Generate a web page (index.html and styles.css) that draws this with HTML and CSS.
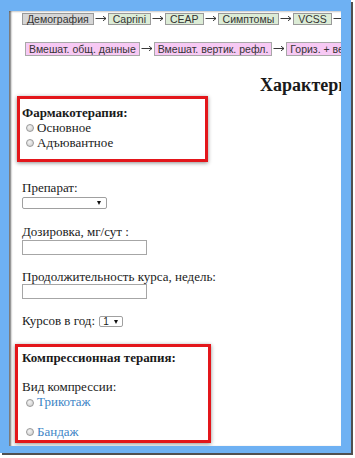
FILE: index.html
```html
<!DOCTYPE html>
<html lang="ru">
<head>
<meta charset="utf-8">
<title>Характеристика лечения</title>
<link rel="stylesheet" href="styles.css">
</head>
<body>
<div class="viewport">
<div class="page">
  <nav class="steps steps-main">
    <span class="step step-current">Демография</span><span class="arrow"><svg viewBox="0 0 12 7" width="12" height="7"><path d="M0.5 3.5H11M8 1.2L11 3.5L8 5.8" fill="none" stroke="#222" stroke-width="0.9"/></svg></span>
    <span class="step">Caprini</span><span class="arrow"><svg viewBox="0 0 12 7" width="12" height="7"><path d="M0.5 3.5H11M8 1.2L11 3.5L8 5.8" fill="none" stroke="#222" stroke-width="0.9"/></svg></span>
    <span class="step">CEAP</span><span class="arrow"><svg viewBox="0 0 12 7" width="12" height="7"><path d="M0.5 3.5H11M8 1.2L11 3.5L8 5.8" fill="none" stroke="#222" stroke-width="0.9"/></svg></span>
    <span class="step">Симптомы</span><span class="arrow"><svg viewBox="0 0 12 7" width="12" height="7"><path d="M0.5 3.5H11M8 1.2L11 3.5L8 5.8" fill="none" stroke="#222" stroke-width="0.9"/></svg></span>
    <span class="step">VCSS</span><span class="arrow"><svg viewBox="0 0 12 7" width="12" height="7"><path d="M0.5 3.5H11M8 1.2L11 3.5L8 5.8" fill="none" stroke="#222" stroke-width="0.9"/></svg></span>
    <span class="step">SF-36</span>
  </nav>
  <nav class="steps steps-interv">
    <span class="step step-pink">Вмешат. общ. данные</span><span class="arrow"><svg viewBox="0 0 12 7" width="12" height="7"><path d="M0.5 3.5H11M8 1.2L11 3.5L8 5.8" fill="none" stroke="#222" stroke-width="0.9"/></svg></span>
    <span class="step step-pink">Вмешат. вертик. рефл.</span><span class="arrow"><svg viewBox="0 0 12 7" width="12" height="7"><path d="M0.5 3.5H11M8 1.2L11 3.5L8 5.8" fill="none" stroke="#222" stroke-width="0.9"/></svg></span>
    <span class="step step-pink">Гориз. + вертик. рефл.</span>
  </nav>

  <h2 class="title">Характеристика лечения</h2>

  <div class="callout callout-pharma">
    <div class="line"><b>Фармакотерапия:</b></div>
    <label class="line radio-line"><span class="radio"></span>Основное</label>
    <label class="line radio-line"><span class="radio"></span>Адъювантное</label>
  </div>

  <div class="field field-first">
    <div class="line">Препарат:</div>
    <span class="select select-drug"><span class="caret"></span></span>
  </div>
  <div class="field">
    <div class="line">Дозировка, мг/сут :</div>
    <input class="text-input" type="text">
  </div>
  <div class="field">
    <div class="line">Продолжительность курса, недель:</div>
    <input class="text-input" type="text">
  </div>
  <div class="field">
    <div class="line">Курсов в год: <span class="select select-small"><span class="select-value">1</span><span class="caret"></span></span></div>
  </div>

  <div class="callout callout-compress">
    <div class="line"><b>Компрессионная терапия:</b></div>
    <div class="line blank"></div>
    <div class="line">Вид компрессии:</div>
    <label class="line radio-line link"><span class="radio"></span>Трикотаж</label>
    <div class="line blank"></div>
    <label class="line radio-line link"><span class="radio"></span>Бандаж</label>
  </div>
</div>
</div>
<div class="frame"></div>
</body>
</html>
```
FILE: styles.css
```css
html, body {
  margin: 0;
  padding: 0;
  overflow: hidden;
  background: #ffffff;
}
body {
  width: 355px;
  height: 458px;
  font-family: "Liberation Serif", "Times New Roman", serif;
  font-size: 13px;
  color: #1a1a1a;
}
.viewport {
  width: 343px;
  height: 458px;
  overflow: hidden;
}
.page {
  padding: 13px 0 0 22px;
  width: 700px;
}
.steps {
  display: flex;
  white-space: nowrap;
  font-family: "Liberation Sans", Arial, sans-serif;
  font-size: 10.5px;
  color: #333;
}
.step {
  display: block;
  box-sizing: border-box;
  padding: 0 4px;
  border: 1px solid #9a9a9a;
  background: #dcecd6;
}
.steps-main .step {
  height: 12px;
  line-height: 10px;
}
.step-current {
  background: #d6d6d6;
}
.steps-interv {
  margin-top: 17px;
  margin-left: 3px;
}
.steps-interv .step {
  height: 14px;
  line-height: 12px;
  padding: 0 3px;
}
.step-pink {
  background: #f7c9f4;
  border-color: #a8a8a8;
}
.arrow {
  display: flex;
  align-items: center;
  justify-content: center;
  width: 14px;
}
.arrow svg {
  display: block;
  margin-top: -1px;
}
.title {
  margin: 19px 0 0 238px;
  font-size: 18px;
  line-height: 21px;
  font-weight: bold;
  white-space: nowrap;
}
.line {
  display: block;
  height: 14.8px;
  line-height: 14.8px;
  white-space: nowrap;
}
.callout {
  box-sizing: border-box;
  border: 3px solid #e3161b;
  box-shadow: 0 1px 4px rgba(0, 0, 0, 0.45);
}
.callout-pharma {
  margin-left: -5px;
  width: 191px;
  padding: 7px 0 8.6px 2px;
}
.callout-compress {
  margin-top: 7px;
  margin-left: -7px;
  width: 196px;
  padding: 3.6px 0 0 4px;
}
.radio-line {
  display: flex;
  align-items: center;
}
.radio {
  display: inline-block;
  box-sizing: border-box;
  width: 8px;
  height: 8px;
  margin: 0 3px 0 4px;
  border: 1px solid #9a9a9a;
  border-radius: 50%;
  background: radial-gradient(circle at 40% 35%, #f4f4f4, #c8c8c8);
}
.link {
  color: #3d85c6;
}
.field {
  margin-bottom: 15px;
}
.field-first {
  margin-top: 18.6px;
  margin-bottom: 16px;
}
.select {
  position: relative;
  display: inline-block;
  box-sizing: border-box;
  border: 1px solid #a0a0a0;
  border-radius: 2px;
  background: #fff;
  vertical-align: top;
}
.select-drug {
  display: block;
  width: 85px;
  height: 12px;
  margin-top: 1.4px;
}
.caret {
  position: absolute;
  right: 5px;
  top: 3px;
  width: 0;
  height: 0;
  border-left: 2.5px solid transparent;
  border-right: 2.5px solid transparent;
  border-top: 4px solid #111;
}
.select-small {
  width: 24px;
  height: 11px;
  margin-top: 2px;
  margin-left: 1px;
  font-family: "Liberation Sans", Arial, sans-serif;
  font-size: 10px;
  line-height: 9px;
}
.select-small .select-value {
  padding-left: 3px;
}
.select-small .caret {
  top: 3px;
  right: 4px;
}
.text-input {
  display: block;
  box-sizing: border-box;
  width: 125px;
  height: 15px;
  margin: 0;
  padding: 0;
  border: 1px solid #a6a6a6;
  background: #fff;
}
.frame {
  position: fixed;
  left: 0;
  top: 0;
  width: 351px;
  height: 453px;
  box-sizing: border-box;
  border-style: solid;
  border-color: #6eb1f3;
  border-width: 11px 10px 7px 9px;
  box-shadow: 2px 2px 0 #505050,
              inset 3px 0 2px -1px rgba(0, 0, 0, 0.55),
              inset 0 2px 2px -1px rgba(0, 0, 0, 0.2);
  pointer-events: none;
}
```
